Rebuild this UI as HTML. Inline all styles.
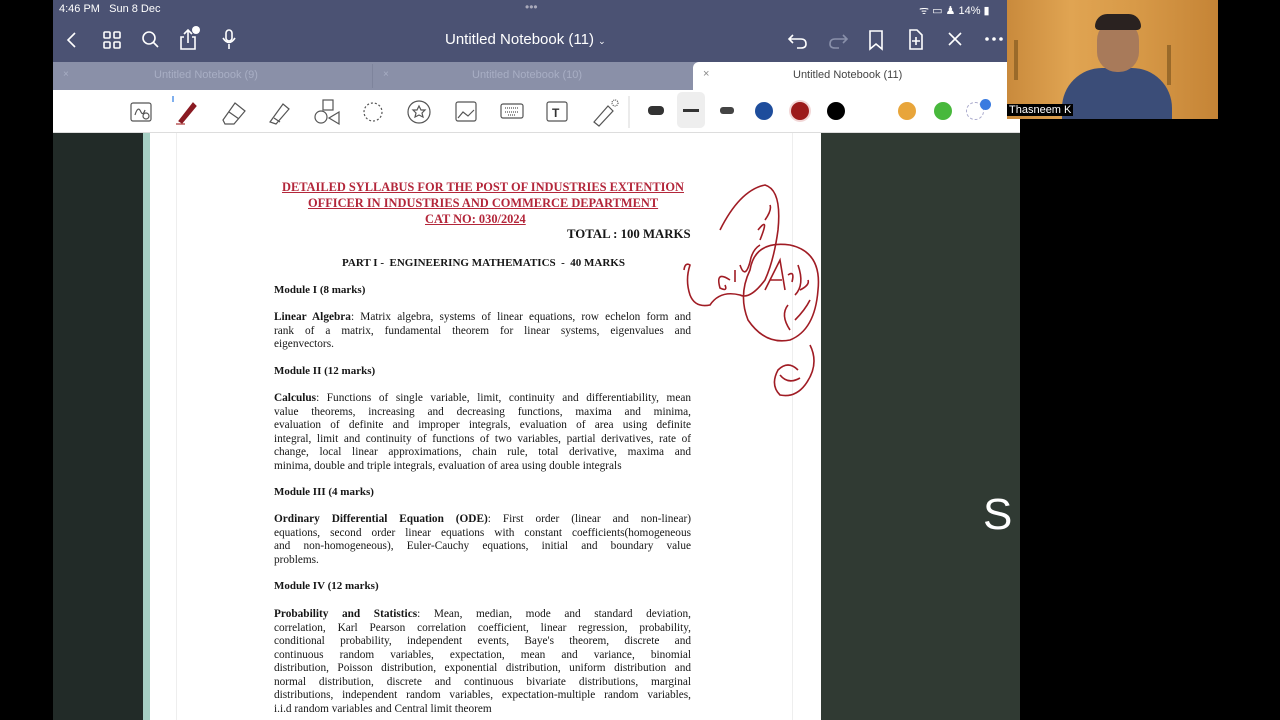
<!DOCTYPE html>
<html><head><meta charset="utf-8"><style>
*{margin:0;padding:0;box-sizing:border-box}
body{width:1280px;height:720px;background:#000;position:relative;overflow:hidden;font-family:"Liberation Sans",sans-serif}
.a{position:absolute}
.top{left:53px;top:0;width:967px;height:62px;background:#4b5273;color:#fff}
.tabs{left:53px;top:62px;width:967px;height:28px;background:#8a90a8}
.tb{left:53px;top:90px;width:967px;height:43px;background:#fff;border-bottom:1px solid #ddd}
.ln{position:absolute;left:274px;width:417px;font-family:"Liberation Serif",serif;font-size:11.3px;color:#161616;white-space:nowrap;text-align:justify;text-align-last:justify;line-height:13px}
.ln.e{text-align-last:left}
.h{position:absolute;left:274px;font-family:"Liberation Serif",serif;font-size:11px;font-weight:bold;color:#161616}
.red{position:absolute;font-family:"Liberation Serif",serif;font-size:12.4px;font-weight:bold;color:#b3263a;text-decoration:underline;white-space:nowrap}
.ic{stroke:#fff;fill:none;stroke-width:1.6}
.dot{position:absolute;top:102px;width:18px;height:18px;border-radius:50%}
</style></head><body>
<div class="a top">
 <div class="a" style="left:6px;top:3px;font-size:11px">4:46 PM&nbsp;&nbsp; Sun 8 Dec</div>
 <div class="a" style="left:472px;top:0px;font-size:12px;color:#aab">•••</div>
 <div class="a" style="left:866px;top:3px;font-size:11px">ᯤ ▭ ♟ 14% ▮</div>
 <div class="a" style="left:392px;top:31px;font-size:15px">Untitled Notebook (11) <span style="font-size:9px">⌄</span></div>
 <svg class="a" style="left:0;top:25px" width="967" height="30">
  <path class="ic" d="M22 8 L15 15 L22 22"/>
  <rect class="ic" x="51" y="7" width="6" height="6" rx="1"/><rect class="ic" x="61" y="7" width="6" height="6" rx="1"/><rect class="ic" x="51" y="17" width="6" height="6" rx="1"/><rect class="ic" x="61" y="17" width="6" height="6" rx="1"/>
  <circle class="ic" cx="96" cy="13" r="6"/><path class="ic" d="M100 17 L105 22"/>
  <path class="ic" d="M131 12 H128 V24 H142 V12 H139 M135 18 V6 M131 9 L135 5 L139 9"/><circle cx="143" cy="5" r="4" fill="#fff"/>
  <rect class="ic" x="173" y="5" width="6" height="11" rx="3"/><path class="ic" d="M170 13 Q176 22 182 13 M176 19 V24"/>
  <path class="ic" d="M740 10 L736 14 L740 18 M736 14 H748 Q753 14 753 19 Q753 23 748 23 H744"/>
  <path d="M790 10 L794 14 L790 18 M794 14 H782 Q777 14 777 19 Q777 23 782 23 H786" stroke="#8990aa" fill="none" stroke-width="1.6"/>
  <path class="ic" d="M817 6 H829 V24 L823 19 L817 24 Z"/>
  <path class="ic" d="M857 5 H864 L869 10 V24 H857 Z M863 12 V20 M859 16 H867"/>
  <path class="ic" d="M896 8 L908 20 M908 8 L896 20"/>
  <circle cx="934" cy="14" r="1.8" fill="#fff"/><circle cx="941" cy="14" r="1.8" fill="#fff"/><circle cx="948" cy="14" r="1.8" fill="#fff"/>
 </svg>
</div>
<div class="a tabs">
 <div class="a" style="left:319px;top:2px;width:1px;height:24px;background:#7e849c"></div>
 <div class="a" style="left:10px;top:7px;font-size:10px;color:#a8aec4">×</div>
 <div class="a" style="left:101px;top:7px;font-size:11px;color:#a8aec4">Untitled Notebook (9)</div>
 <div class="a" style="left:330px;top:7px;font-size:10px;color:#a8aec4">×</div>
 <div class="a" style="left:419px;top:7px;font-size:11px;color:#a8aec4">Untitled Notebook (10)</div>
 <div class="a" style="left:640px;top:0;width:327px;height:28px;background:#fff;border-radius:6px 6px 0 0">
  <div class="a" style="left:10px;top:6px;font-size:11px;color:#888">×</div>
  <div class="a" style="left:100px;top:7px;font-size:11px;color:#444">Untitled Notebook (11)</div>
 </div>
</div>
<div class="a tb">
 <svg class="a" style="left:0;top:0" width="967" height="43" stroke="#555" fill="none" stroke-width="1.2">
  <rect x="78" y="13" width="20" height="18" rx="2"/><path d="M82 25 Q85 15 88 22 Q90 26 92 20"/><circle cx="93" cy="26" r="3"/>
  <path d="M120 6 V12" stroke="#2a7ae2"/>
  <path d="M126 31 L140 13 L143 16 L129 33 Z" fill="#8a1a22" stroke="#8a1a22"/><path d="M123 34 H132" stroke="#a33"/>
  <path d="M170 30 L182 13 L192 21 L181 34 H172 Z M176 22 L186 29"/>
  <path d="M217 32 L230 14 L236 19 L223 34 Z M221 28 L227 32"/>
  <rect x="270" y="10" width="10" height="10"/><circle cx="268" cy="27" r="6"/><path d="M286 22 L276 28 L286 34 Z"/>
  <circle cx="320" cy="22" r="9" stroke-dasharray="2 2"/>
  <circle cx="366" cy="22" r="11"/><path d="M366 16 L368 20 L372 20 L369 23 L370 27 L366 25 L362 27 L363 23 L360 20 L364 20 Z"/>
  <rect x="403" y="12" width="20" height="19" rx="2"/><path d="M405 28 L410 22 L415 26 L421 20"/>
  <rect x="448" y="14" width="22" height="14" rx="2"/><path d="M452 18 H466 M452 22 H466 M455 25 H463" stroke-dasharray="1 1"/>
  <rect x="494" y="12" width="20" height="19" rx="2"/><text x="499" y="27" font-size="12" fill="#333" stroke="none" font-family="Liberation Sans" font-weight="bold">T</text>
  <path d="M541 32 L555 16 L560 21 L546 36 Z"/><circle cx="562" cy="13" r="3" stroke-dasharray="1 1"/>
  <path d="M576 6 V38" stroke="#ddd"/>
 </svg>
 <div class="a" style="left:595px;top:16px;width:16px;height:9px;border-radius:4px;background:#333"></div>
 <div class="a" style="left:624px;top:2px;width:28px;height:36px;border-radius:5px;background:#eee"></div>
 <div class="a" style="left:630px;top:19px;width:16px;height:3px;background:#333"></div>
 <div class="a" style="left:667px;top:17px;width:14px;height:7px;border-radius:3px;background:#444"></div>
</div>
<div class="dot" style="left:755px;background:#1e4d9c"></div>
<div class="dot" style="left:791px;background:#9c1a1a;box-shadow:0 0 0 2px #f2d6d6"></div>
<div class="dot" style="left:827px;background:#000"></div>
<div class="dot" style="left:898px;background:#e8a53a"></div>
<div class="dot" style="left:934px;background:#48b83c"></div>
<div class="a" style="left:966px;top:102px;width:18px;height:18px;border-radius:50%;border:1px dashed #aac"></div>
<div class="a" style="left:980px;top:99px;width:11px;height:11px;border-radius:50%;background:#3a7be0"></div>
<div class="a" style="left:53px;top:133px;width:90px;height:587px;background:#222b28"></div>
<div class="a" style="left:143px;top:133px;width:7px;height:587px;background:#a6cfc4"></div>
<div class="a" style="left:150px;top:133px;width:671px;height:587px;background:#fff"></div>
<div class="a" style="left:176px;top:133px;width:1px;height:587px;background:#eee"></div>
<div class="a" style="left:792px;top:133px;width:1px;height:587px;background:#eee"></div>
<div class="a" style="left:821px;top:133px;width:199px;height:587px;background:#303a33"></div>
<div class="a" style="left:983px;top:490px;font-size:44px;color:#fff;width:37px;overflow:hidden">S</div>
<div class="red" style="left:282px;top:180px">DETAILED SYLLABUS FOR THE POST OF INDUSTRIES EXTENTION</div>
<div class="red" style="left:308px;top:196px">OFFICER IN INDUSTRIES AND COMMERCE DEPARTMENT</div>
<div class="red" style="left:425px;top:212px">CAT NO: 030/2024</div>
<div class="h" style="left:567px;top:227px;font-size:12.8px">TOTAL : 100 MARKS</div>
<div class="h" style="left:342px;top:257px">PART I -&nbsp; ENGINEERING MATHEMATICS&nbsp; -&nbsp; 40 MARKS</div>
<div class="h" style="top:284px">Module I (8 marks)</div>
<div class="ln" style="top:311px"><b>Linear Algebra</b>: Matrix algebra, systems of linear equations, row echelon form and</div>
<div class="ln" style="top:325px">rank of a matrix, fundamental theorem for linear systems, eigenvalues and</div>
<div class="ln e" style="top:338px">eigenvectors.</div>
<div class="h" style="top:365px">Module II (12 marks)</div>
<div class="ln" style="top:392px"><b>Calculus</b>: Functions of single variable, limit, continuity and differentiability, mean</div>
<div class="ln" style="top:406px">value theorems, increasing and decreasing functions, maxima and minima,</div>
<div class="ln" style="top:419px">evaluation of definite and improper integrals, evaluation of area using definite</div>
<div class="ln" style="top:433px">integral, limit and continuity of functions of two variables, partial derivatives, rate of</div>
<div class="ln" style="top:446px">change, local linear approximations, chain rule, total derivative, maxima and</div>
<div class="ln e" style="top:460px">minima, double and triple integrals, evaluation of area using double integrals</div>
<div class="h" style="top:486px">Module III (4 marks)</div>
<div class="ln" style="top:513px"><b>Ordinary Differential Equation (ODE)</b>: First order (linear and non-linear)</div>
<div class="ln" style="top:527px">equations, second order linear equations with constant coefficients(homogeneous</div>
<div class="ln" style="top:540px">and non-homogeneous), Euler-Cauchy equations, initial and boundary value</div>
<div class="ln e" style="top:554px">problems.</div>
<div class="h" style="top:580px">Module IV (12 marks)</div>
<div class="ln" style="top:608px"><b>Probability and Statistics</b>: Mean, median, mode and standard deviation,</div>
<div class="ln" style="top:622px">correlation, Karl Pearson correlation coefficient, linear regression, probability,</div>
<div class="ln" style="top:635px">conditional probability, independent events, Baye's theorem, discrete and</div>
<div class="ln" style="top:649px">continuous random variables, expectation, mean and variance, binomial</div>
<div class="ln" style="top:662px">distribution, Poisson distribution, exponential distribution, uniform distribution and</div>
<div class="ln" style="top:676px">normal distribution, discrete and continuous bivariate distributions, marginal</div>
<div class="ln" style="top:689px">distributions, independent random variables, expectation-multiple random variables,</div>
<div class="ln e" style="top:703px">i.i.d random variables and Central limit theorem</div>
<svg class="a" style="left:670px;top:170px" width="160" height="240" fill="none" stroke="#a01c24" stroke-width="1.6">
 <path d="M50 60 Q70 20 95 15 Q112 20 108 60 Q104 90 95 110 Q80 130 70 125 Q50 120 40 135 Q25 138 20 125 Q15 110 20 95 Q15 92 14 100"/>
 <path d="M60 110 Q45 100 50 118 Q58 122 55 115 M65 100 V112 M70 95 Q75 110 80 92 Q82 80 90 75 M90 70 Q100 45 88 60 M95 50 Q102 40 100 35"/>
 <path d="M80 100 Q85 70 120 75 Q152 82 148 120 Q145 160 120 170 Q95 175 78 150 Q68 125 80 100 Z"/>
 <path d="M95 120 L110 90 L115 120 M100 110 H112 M118 105 Q125 100 122 112 M128 95 Q135 115 125 125"/>
 <path d="M120 160 Q110 145 118 135 M125 150 Q135 140 140 130 M130 120 Q140 115 138 110"/>
 <path d="M140 175 Q150 195 135 215 Q125 228 110 225 Q100 215 108 200 Q118 190 128 200 M110 205 Q118 215 130 208"/>
</svg>
<div class="a" style="left:1007px;top:0;width:211px;height:119px;background:linear-gradient(90deg,#c98a3c,#e0a452 30%,#d89a48 60%,#c58436);overflow:hidden">
 <div class="a" style="left:7px;top:40px;width:4px;height:40px;background:#9a6a2a"></div>
 <div class="a" style="left:160px;top:45px;width:4px;height:40px;background:#9a6a2a"></div>
 <div class="a" style="left:55px;top:68px;width:110px;height:60px;border-radius:40px 40px 0 0;background:#3b4d78"></div>
 <div class="a" style="left:90px;top:20px;width:42px;height:52px;border-radius:20px;background:#a87a5a"></div>
 <div class="a" style="left:88px;top:14px;width:46px;height:16px;border-radius:20px 20px 6px 6px;background:#2a2220"></div>
 <div class="a" style="left:0;top:104px;background:#000;color:#fff;font-size:11px;padding:0 2px">Thasneem K</div>
</div>
</body></html>
